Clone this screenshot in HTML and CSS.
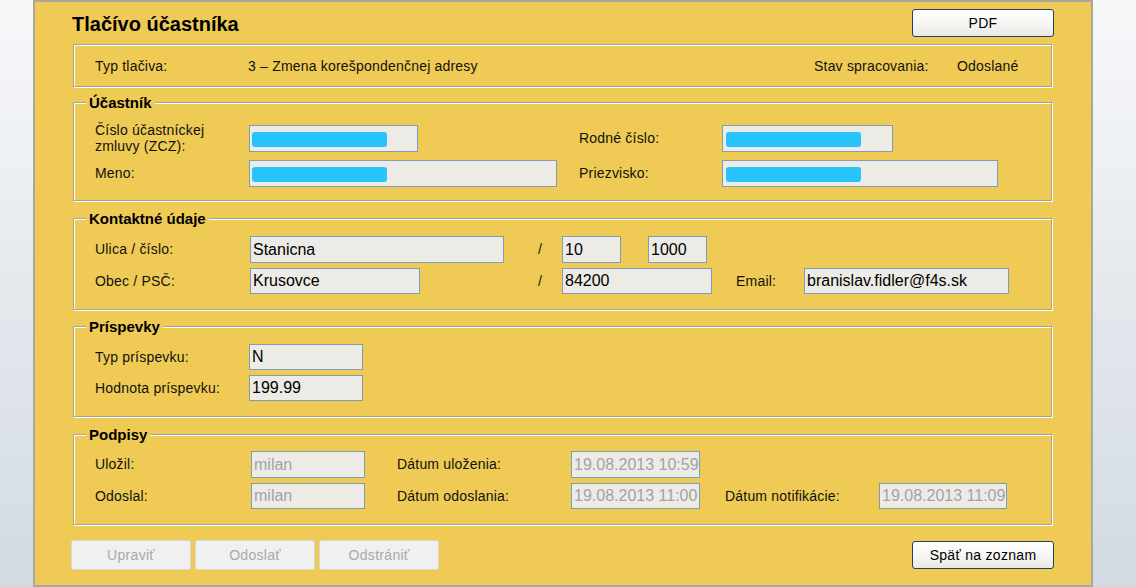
FILE: index.html
```html
<!DOCTYPE html>
<html lang="sk">
<head>
<meta charset="utf-8">
<title>Tlačívo účastníka</title>
<link rel="stylesheet" href="styles.css">
</head>
<body>
<div class="panel">
  <header class="head">
    <h1 class="title">Tlačívo účastníka</h1>
    <button class="btn btn-main" type="button">PDF</button>
  </header>

  <div class="info">
    <span class="info-label">Typ tlačiva:</span>
    <span class="info-value">3 – Zmena korešpondenčnej adresy</span>
    <span class="info-state-label">Stav spracovania:</span>
    <span class="info-state">Odoslané</span>
  </div>

  <fieldset class="group fs-ucastnik">
    <legend>Účastník</legend>
    <div class="fs-body">
      <div class="row row-tall">
        <span class="lbl w154">Číslo účastníckej<br>zmluvy (ZCZ):</span>
        <div class="cell w330"><div class="field h27 f169"><span class="mask"></span></div></div>
        <span class="lbl w143">Rodné číslo:</span>
        <div class="field h27 f171"><span class="mask mask-r"></span></div>
      </div>
      <div class="row">
        <span class="lbl w154">Meno:</span>
        <div class="cell w330"><div class="field h27 f308"><span class="mask"></span></div></div>
        <span class="lbl w143">Priezvisko:</span>
        <div class="field h27 f276"><span class="mask mask-r"></span></div>
      </div>
    </div>
  </fieldset>

  <fieldset class="group fs-kontakt">
    <legend>Kontaktné údaje</legend>
    <div class="fs-body">
      <div class="row">
        <span class="lbl w155">Ulica / číslo:</span>
        <div class="cell w287"><div class="field h27 f254">Stanicna</div></div>
        <span class="slash">/</span>
        <div class="field h27 f59">10</div>
        <div class="field h27 f59 ml27">1000</div>
      </div>
      <div class="row">
        <span class="lbl w155">Obec / PSČ:</span>
        <div class="cell w287"><div class="field f170">Krusovce</div></div>
        <span class="slash">/</span>
        <div class="field f150">84200</div>
        <span class="lbl w68 ml24">Email:</span>
        <div class="field f205">branislav.fidler@f4s.sk</div>
      </div>
    </div>
  </fieldset>

  <fieldset class="group fs-prispevky">
    <legend>Príspevky</legend>
    <div class="fs-body">
      <div class="row row-31">
        <span class="lbl w154">Typ príspevku:</span>
        <div class="field f114">N</div>
      </div>
      <div class="row row-31">
        <span class="lbl w154">Hodnota príspevku:</span>
        <div class="field f114">199.99</div>
      </div>
    </div>
  </fieldset>

  <fieldset class="group fs-podpisy">
    <legend>Podpisy</legend>
    <div class="fs-body">
      <div class="row">
        <span class="lbl w156">Uložil:</span>
        <div class="field h27 f114 off">milan</div>
        <span class="lbl w174 ml32">Dátum uloženia:</span>
        <div class="field h27 f129 off">19.08.2013 10:59</div>
      </div>
      <div class="row">
        <span class="lbl w156">Odoslal:</span>
        <div class="field f114 off">milan</div>
        <span class="lbl w174 ml32">Dátum odoslania:</span>
        <div class="field f129 off">19.08.2013 11:00</div>
        <span class="lbl w154 ml25">Dátum notifikácie:</span>
        <div class="field f128 off">19.08.2013 11:09</div>
      </div>
    </div>
  </fieldset>

  <div class="actions">
    <button class="btn btn-off" type="button" disabled>Upraviť</button>
    <button class="btn btn-off" type="button" disabled>Odoslať</button>
    <button class="btn btn-off" type="button" disabled>Odstrániť</button>
    <button class="btn btn-main btn-back" type="button">Späť na zoznam</button>
  </div>
</div>
</body>
</html>
```

FILE: styles.css
```css
html, body {
  margin: 0;
  height: 587px;
  overflow: hidden;
}

body {
  background: linear-gradient(to bottom, #f7f8fa 0%, #e6eaef 45%, #d2dae2 100%);
  font-family: "Liberation Sans", Arial, sans-serif;
  color: #111;
}

.panel {
  box-sizing: border-box;
  margin-left: 33px;
  width: 1060px;
  height: 587px;
  border: 2px solid #aaa79f;
  background: #efcb55;
  padding: 0 39px 0 38px;
}

/* header */
.head {
  display: flex;
  justify-content: space-between;
  align-items: flex-start;
  box-sizing: border-box;
  height: 35px;
  padding-top: 7px;
  margin-bottom: 7px;
  margin-right: -2px;
}

.title {
  margin: 4px 0 0 -1px;
  font-size: 20px;
  line-height: 23px;
  font-weight: bold;
  color: #000;
}

/* buttons */
.btn {
  box-sizing: border-box;
  font-family: "Liberation Sans", Arial, sans-serif;
  font-size: 14px;
  letter-spacing: 0.3px;
  padding: 0;
  margin: 0;
}

.btn-main {
  width: 142px;
  height: 28px;
  border: 1px solid #213f69;
  border-radius: 3px;
  background: linear-gradient(to bottom, #ffffff 0%, #f6f6f4 50%, #e8e8e4 100%);
  color: #000;
}

.btn-off {
  width: 120px;
  height: 30px;
  border: 1px solid #d6d6d6;
  border-radius: 2px;
  background: #f0f0f0;
  color: #a9a9a9;
}

/* info box */
.info {
  box-sizing: border-box;
  display: flex;
  align-items: center;
  height: 43px;
  border: 1px solid #a5a29a;
  box-shadow: inset 1px 1px 0 #fff, 1px 1px 0 #fff;
  padding: 0 32px 0 21px;
  font-size: 14px;
  letter-spacing: 0.2px;
}

.info-label { width: 153px; }
.info-value { flex: 1; }
.info-state-label { width: 143px; }
.info-state { width: 62px; }

/* fieldsets */
.group {
  margin: 0;
  padding: 0;
  min-width: 0;
  border: 1px solid #a5a29a;
  box-shadow: inset 1px 1px 0 #fff, 1px 1px 0 #fff;
}

.group legend {
  margin-left: 12px;
  padding: 0 3px;
  font-size: 15px;
  line-height: 17px;
  font-weight: bold;
  color: #000;
  background: #efcb55;
}

.fs-body {
  padding-left: 21px;
}

.fs-ucastnik { margin-top: 7px; }
.fs-ucastnik .fs-body { padding-top: 8px; padding-bottom: 11px; }

.fs-kontakt { margin-top: 9px; }
.fs-kontakt .fs-body { padding-top: 6px; padding-bottom: 12px; }

.fs-prispevky { margin-top: 8px; }
.fs-prispevky .fs-body { padding-top: 6px; padding-bottom: 13px; }

.fs-podpisy { margin-top: 9px; }
.fs-podpisy .fs-body { padding-top: 5px; padding-bottom: 12px; }

.row {
  display: flex;
  align-items: center;
  height: 32px;
}

.row-tall { height: 38px; }
.row-31 { height: 31px; }

.lbl {
  font-size: 14px;
  line-height: 16px;
  letter-spacing: 0.2px;
  flex: none;
}

.cell { flex: none; }
.slash {
  flex: none;
  width: 25px;
  font-size: 14px;
  text-indent: 1px;
}

/* fields */
.field {
  box-sizing: border-box;
  flex: none;
  height: 26px;
  border: 1px solid #7f9db9;
  background: #ecebe6;
  padding: 0 2px;
  font-size: 16px;
  line-height: 24px;
  color: #000;
  white-space: nowrap;
  overflow: hidden;
}

.field.h27 { height: 27px; line-height: 25px; }
.field.off { color: #a3a3a3; }

.mask {
  display: block;
  width: 135px;
  height: 15px;
  margin-top: 6px;
  border-radius: 3px;
  background: #28c2fc;
}

.mask-r { margin-left: 1px; }

/* widths */
.w68 { width: 68px; }
.w143 { width: 143px; }
.w154 { width: 154px; }
.w155 { width: 155px; }
.w156 { width: 156px; }
.w174 { width: 174px; }
.w287 { width: 287px; }
.w330 { width: 330px; }

.f59 { width: 59px; }
.f114 { width: 114px; }
.f128 { width: 128px; }
.f129 { width: 129px; }
.f150 { width: 150px; }
.f169 { width: 169px; }
.f170 { width: 170px; }
.f171 { width: 171px; }
.f205 { width: 205px; }
.f254 { width: 254px; }
.f276 { width: 276px; }
.f308 { width: 308px; }

.ml24 { margin-left: 24px; }
.ml25 { margin-left: 25px; }
.ml27 { margin-left: 27px; }
.ml32 { margin-left: 32px; }

/* bottom actions */
.actions {
  display: flex;
  align-items: center;
  gap: 4px;
  margin: 15px -2px 0 -2px;
}

.btn-back { margin-left: auto; }
```
